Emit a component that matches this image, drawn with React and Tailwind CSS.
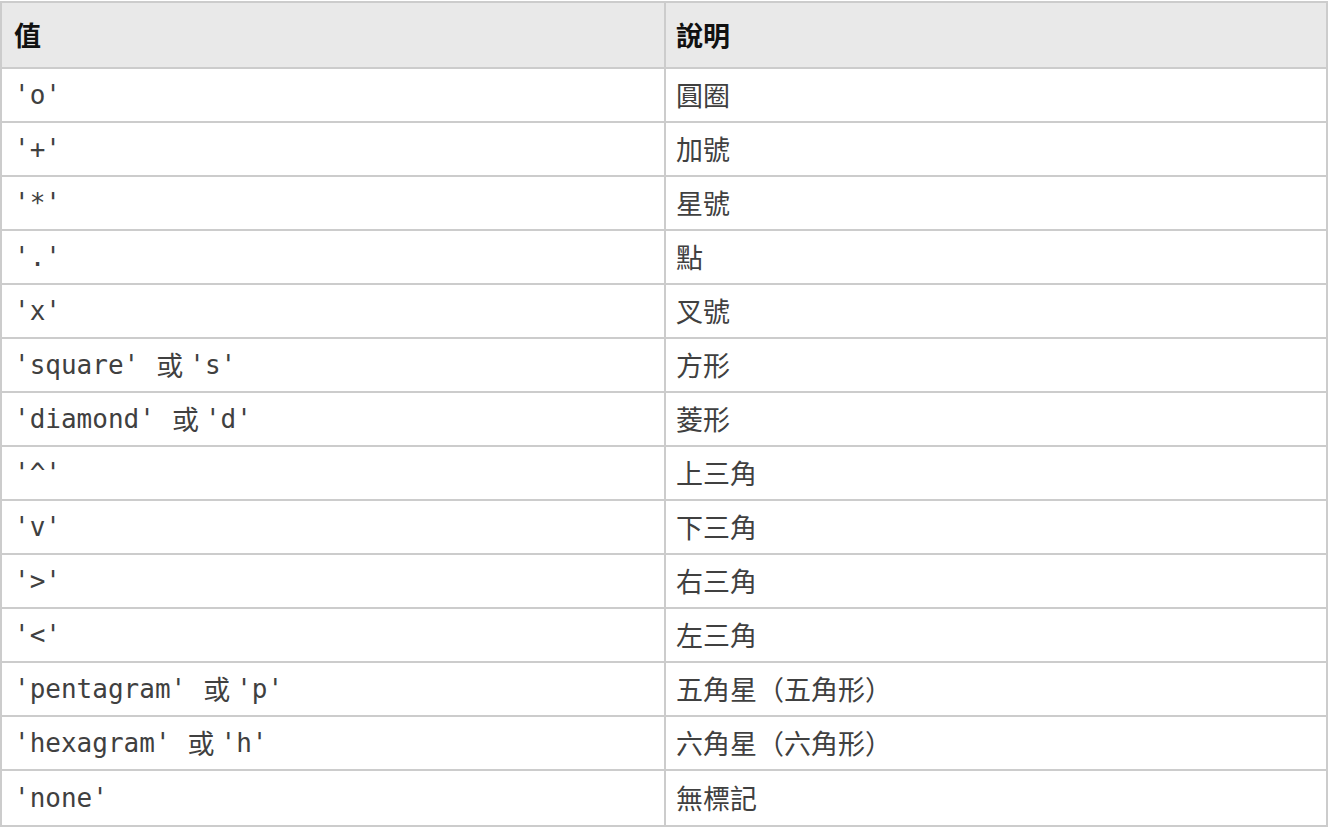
import React from "react";

const rows = [
  { code: ["'o'"], desc: "圓圈" },
  { code: ["'+'"], desc: "加號" },
  { code: ["'*'"], desc: "星號" },
  { code: ["'.'"], desc: "點" },
  { code: ["'x'"], desc: "叉號" },
  { code: ["'square'", "'s'"], desc: "方形" },
  { code: ["'diamond'", "'d'"], desc: "菱形" },
  { code: ["'^'"], desc: "上三角" },
  { code: ["'v'"], desc: "下三角" },
  { code: ["'>'"], desc: "右三角" },
  { code: ["'<'"], desc: "左三角" },
  { code: ["'pentagram'", "'p'"], desc: "五角星（五角形）" },
  { code: ["'hexagram'", "'h'"], desc: "六角星（六角形）" },
  { code: ["'none'"], desc: "無標記" },
];

const sans = "font-['Noto_Sans_CJK_TC','Noto_Sans',sans-serif]";
const mono = "font-['DejaVu_Sans_Mono','Noto_Sans_CJK_TC',monospace]";

const App = () => {
  return (
    <div className="bg-white min-h-[828px] pt-px">
      <div className={`w-[1328px] border-2 border-[#cccccc] ${sans}`}>
        {/* Header */}
        <div className="flex h-[66px] bg-[#e9e9e9] border-b-2 border-[#cccccc]">
          <div className="w-[664px] shrink-0 border-r-2 border-[#cccccc] flex items-center pl-[12px] text-[27px] font-bold text-[#111]">
            值
          </div>
          <div className="flex-1 flex items-center pl-[10px] text-[27px] font-bold text-[#111]">
            說明
          </div>
        </div>

        {/* Rows */}
        {rows.map((row, i) => (
          <div
            key={i}
            className={`flex h-[54px] ${
              i < rows.length - 1 ? "border-b-2 border-[#cccccc]" : ""
            }`}
          >
            <div className="w-[664px] shrink-0 border-r-2 border-[#cccccc] flex items-center pl-[12px] text-[#404040]">
              <span className={`${mono} text-[26px]`}>{row.code[0]}</span>
              {row.code[1] && (
                <>
                  <span className="text-[27px] ml-[17px] mr-[6px]">或</span>
                  <span className={`${mono} text-[26px]`}>{row.code[1]}</span>
                </>
              )}
            </div>
            <div className="flex-1 flex items-center pl-[10px] text-[27px] text-[#404040]">
              {row.desc}
            </div>
          </div>
        ))}
      </div>
    </div>
  );
};

export default App;
